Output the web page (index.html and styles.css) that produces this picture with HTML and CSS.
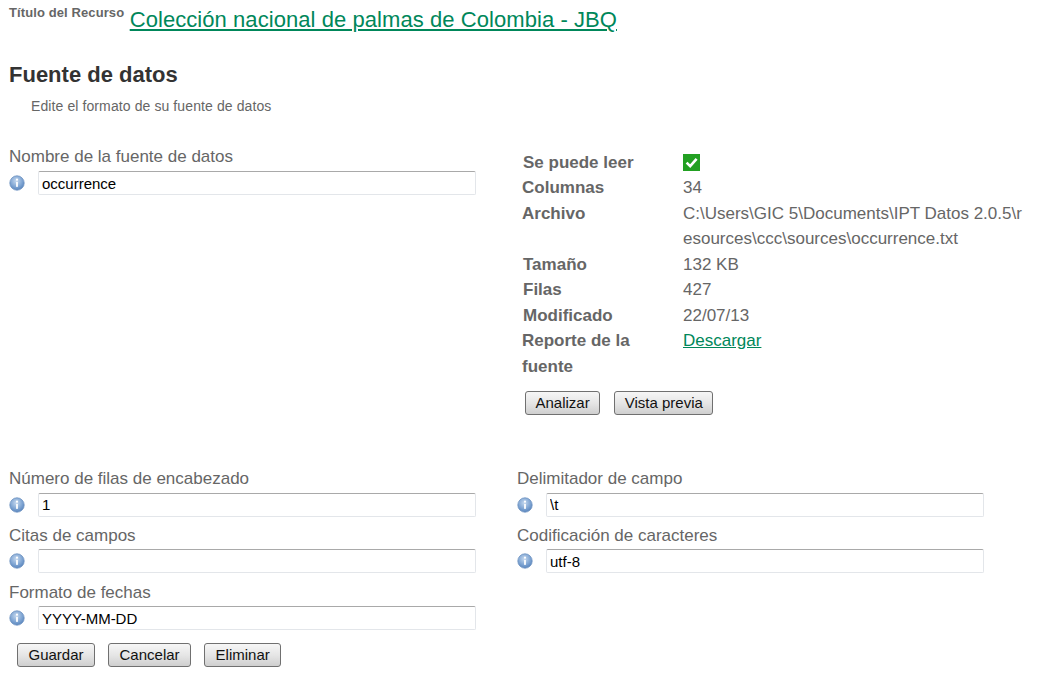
FILE: index.html
```html
<!DOCTYPE html>
<html lang="es">
<head>
<meta charset="utf-8">
<title>Fuente de datos</title>
<link rel="stylesheet" href="styles.css">
</head>
<body>
<svg class="defs" width="0" height="0" aria-hidden="true">
  <defs>
    <radialGradient id="ib" cx="0.45" cy="0.35" r="0.75">
      <stop offset="0" stop-color="#c5d8ee"/>
      <stop offset="0.55" stop-color="#7fa5d3"/>
      <stop offset="1" stop-color="#4a78b4"/>
    </radialGradient>
    <symbol id="info" viewBox="0 0 16 16">
      <circle cx="8" cy="8" r="7.2" fill="url(#ib)" stroke="#6f93c2" stroke-width="0.8"/>
      <circle cx="8" cy="4.7" r="1.1" fill="#fff"/>
      <rect x="7.1" y="6.7" width="1.8" height="5.2" rx="0.6" fill="#fff"/>
    </symbol>
  </defs>
</svg>

<header class="resource">
  <span class="resource-label">Título del Recurso</span>
  <a class="resource-link" href="#">Colección nacional de palmas de Colombia - JBQ</a>
</header>

<h1 class="title">Fuente de datos</h1>
<p class="intro">Edite el formato de su fuente de datos</p>

<section class="top">
  <div class="field top-field">
    <label class="field-label">Nombre de la fuente de datos</label>
    <div class="field-row">
      <svg class="info"><use href="#info"/></svg>
      <input class="text" type="text" value="occurrence">
    </div>
  </div>

  <div class="details">
    <dl class="facts">
      <dt class="first">Se puede leer</dt>
      <dd class="first"><span class="check"><svg viewBox="0 0 17 17" width="17" height="17"><path d="M3.6 8.6 7.2 12.2 13.6 4.8" fill="none" stroke="#fff" stroke-width="2.6"/></svg></span></dd>
      <dt>Columnas</dt><dd>34</dd>
      <dt>Archivo</dt><dd>C:\Users\GIC 5\Documents\IPT Datos 2.0.5\resources\ccc\sources\occurrence.txt</dd>
      <dt class="shift">Tamaño</dt><dd>132 KB</dd>
      <dt class="shift">Filas</dt><dd>427</dd>
      <dt class="shift">Modificado</dt><dd>22/07/13</dd>
      <dt>Reporte de la fuente</dt><dd><a class="plain-link" href="#">Descargar</a></dd>
    </dl>
    <div class="buttons detail-buttons">
      <button class="btn" type="button">Analizar</button>
      <button class="btn" type="button">Vista previa</button>
    </div>
  </div>
</section>

<section class="lower">
  <div class="field">
    <label class="field-label">Número de filas de encabezado</label>
    <div class="field-row"><svg class="info"><use href="#info"/></svg><input class="text" type="text" value="1"></div>
  </div>
  <div class="field">
    <label class="field-label">Delimitador de campo</label>
    <div class="field-row"><svg class="info"><use href="#info"/></svg><input class="text" type="text" value="\t"></div>
  </div>
  <div class="field">
    <label class="field-label">Citas de campos</label>
    <div class="field-row"><svg class="info"><use href="#info"/></svg><input class="text" type="text" value=""></div>
  </div>
  <div class="field">
    <label class="field-label">Codificación de caracteres</label>
    <div class="field-row"><svg class="info"><use href="#info"/></svg><input class="text" type="text" value="utf-8"></div>
  </div>
  <div class="field">
    <label class="field-label">Formato de fechas</label>
    <div class="field-row"><svg class="info"><use href="#info"/></svg><input class="text" type="text" value="YYYY-MM-DD"></div>
  </div>
</section>

<div class="buttons form-buttons">
  <button class="btn" type="button">Guardar</button>
  <button class="btn" type="button">Cancelar</button>
  <button class="btn" type="button">Eliminar</button>
</div>
</body>
</html>
```

FILE: styles.css
```css
* { box-sizing: border-box; }
html, body { margin: 0; padding: 0; }
body {
  width: 1040px;
  height: 674px;
  overflow: hidden;
  padding: 5px 0 0 9px;
  background: #fff;
  color: #666;
  font-family: "Liberation Sans", Arial, sans-serif;
  font-size: 17px;
}
.defs { position: absolute; }

.resource { display: flex; align-items: flex-start; height: 33px; }
.resource-label { font-size: 13px; font-weight: bold; line-height: 16px; letter-spacing: 0.1px; color: #666; margin-right: 5.5px; }
.resource-link { font-size: 22px; line-height: 30px; letter-spacing: 0.065px; color: #00875a; text-decoration: underline; }

.title { margin: 24px 0 0; font-size: 22px; line-height: 26px; font-weight: bold; color: #333; }
.intro { margin: 10px 0 0 22px; font-size: 14px; line-height: 16px; letter-spacing: 0.1px; color: #666; }

.top { display: flex; margin-top: 33px; }
.top-field { width: 508px; flex: none; }

.field-label { display: block; font-size: 17px; line-height: 20px; color: #666; }
.field-row { display: flex; align-items: center; margin-top: 4.4px; }
.info { width: 16px; height: 16px; flex: none; margin-right: 13px; }
.text {
  width: 438px;
  height: 24px;
  padding: 0 3px;
  border: 1px solid #e3e6ea;
  border-top-color: #a9a9a9;
  border-radius: 2px;
  background: #fff;
  color: #000;
  font-family: inherit;
  font-size: 15px;
}

.details { width: 510px; margin-top: 4px; padding-left: 5px; }
.facts {
  display: grid;
  grid-template-columns: 161px 341px;
  margin: 0;
  font-size: 17px;
  line-height: 25.5px;
}
.facts dt { font-weight: bold; color: #666; padding-right: 20px; }
.facts dd { margin: 0; word-break: break-all; color: #666; }
.facts .first { line-height: 24.2px; }
dt.first, dt.shift { padding-left: 1px; }
.check { display: block; width: 17px; height: 17px; margin-top: 3px; background: #22a022; }
.check svg { display: block; }
.plain-link { color: #00875a; text-decoration: underline; }

.btn {
  height: 24px;
  padding: 0 10.5px;
  border: 1px solid #707070;
  border-radius: 3px;
  background: linear-gradient(#f6f6f6, #e6e6e6 50%, #cfcfcf);
  color: #111;
  font-family: inherit;
  font-size: 15px;
  line-height: 22px;
}
.buttons { display: flex; }
.detail-buttons { gap: 14px; margin: 12px 0 0 3px; }
.detail-buttons .btn { padding: 0 9.5px; }

.lower {
  display: grid;
  grid-template-columns: 508px 467px;
  row-gap: 9.55px;
  margin-top: 54.2px;
}
.lower .field-row { margin-top: 3.2px; }
.form-buttons { gap: 13px; margin: 13px 0 0 8px; }
```
